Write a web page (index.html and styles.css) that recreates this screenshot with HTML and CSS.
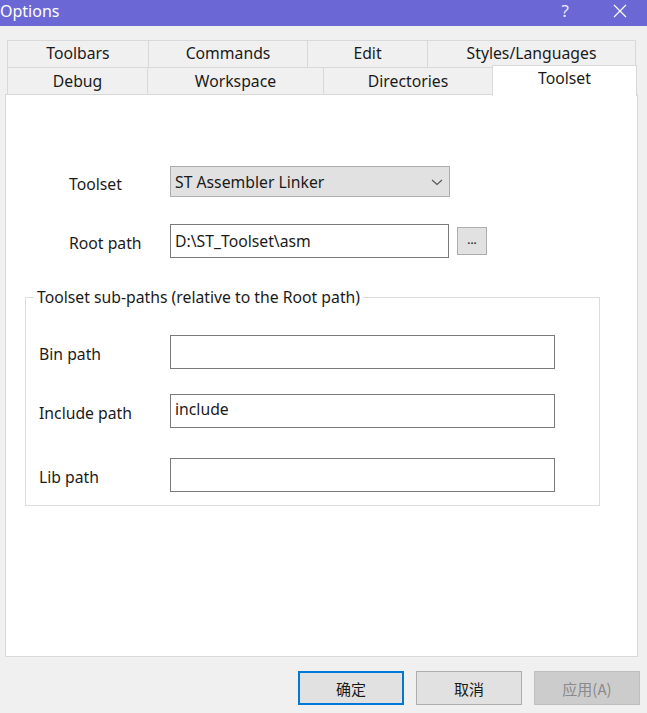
FILE: index.html
```html
<!DOCTYPE html>
<html>
<head>
<meta charset="utf-8">
<link rel="stylesheet" href="styles.css">
</head>
<body>
<div class="dialog">
  <div class="titlebar">
    <span class="title">Options</span>
    <span class="tb-help">?</span>
    <span class="tb-close">
      <svg width="14" height="14" viewBox="0 0 14 14"><path d="M1 1 L13 13 M13 1 L1 13" stroke="#fff" stroke-width="1.2" fill="none"/></svg>
    </span>
  </div>

  <div class="tabs">
    <div class="tabrow row1">
      <div class="tab w-toolbars">Toolbars</div>
      <div class="tab w-commands">Commands</div>
      <div class="tab w-edit">Edit</div>
      <div class="tab w-styles">Styles/Languages</div>
    </div>
    <div class="tabrow row2">
      <div class="tab w-debug">Debug</div>
      <div class="tab w-workspace">Workspace</div>
      <div class="tab w-directories">Directories</div>
      <div class="tab w-toolset selected">Toolset</div>
    </div>
  </div>

  <div class="panel">
    <div class="toprow">
      <label class="lbl">Toolset</label>
      <div class="select">
        <span>ST Assembler Linker</span>
        <svg class="chev" width="12" height="7" viewBox="0 0 12 7"><path d="M1 1 L6 5.5 L11 1" stroke="#555" stroke-width="1.1" fill="none"/></svg>
      </div>
    </div>
    <div class="toprow root">
      <label class="lbl">Root path</label>
      <div class="input wide">D:\ST_Toolset\asm</div>
      <div class="browse">...</div>
    </div>

    <div class="group">
      <div class="legend">Toolset sub-paths (relative to the Root path)</div>
      <div class="grow bin">
        <label class="glbl">Bin path</label>
        <div class="input sub"></div>
      </div>
      <div class="grow inc">
        <label class="glbl">Include path</label>
        <div class="input sub top">include</div>
      </div>
      <div class="grow lib">
        <label class="glbl">Lib path</label>
        <div class="input sub"></div>
      </div>
    </div>
  </div>

  <div class="buttons">
    <div class="btn ok">确定</div>
    <div class="btn">取消</div>
    <div class="btn disabled">应用(A)</div>
  </div>
</div>
</body>
</html>
```

FILE: styles.css
```css
html, body {
  margin: 0;
  padding: 0;
}
body {
  width: 647px;
  height: 713px;
  overflow: hidden;
  background: #f0f0f0;
  font-family: "Noto Sans", "Noto Sans CJK SC", sans-serif;
  font-size: 15.75px;
  color: #1a1a1a;
}
.dialog {
  display: flex;
  flex-direction: column;
  height: 713px;
}
.titlebar {
  height: 26px;
  background: #6b68d6;
  color: #fff;
  display: flex;
  align-items: center;
}
.title {
  font-size: 16px;
  line-height: 20px;
  margin-top: -4px;
}
.tb-help {
  margin-left: auto;
  font-size: 17px;
  margin-right: 44px;
  margin-top: -5px;
  color: #e8e8ff;
}
.tb-close {
  margin-right: 20px;
  margin-top: -4px;
  display: flex;
}
.tabs {
  margin-top: 14px;
  display: flex;
  flex-direction: column;
}
.tabrow {
  display: flex;
}
.row1 {
  margin-left: 7px;
  height: 27px;
}
.row2 {
  margin-left: 7px;
  height: 28px;
}
.tab {
  box-sizing: border-box;
  border: 1px solid #d9d9d9;
  border-right: none;
  border-bottom: none;
  display: flex;
  align-items: center;
  justify-content: center;
  background: #f0f0f0;
  color: #1a1a1a;
  padding-bottom: 2px;
}
.row1 .tab:last-child { border-right: 1px solid #d9d9d9; }
.w-toolbars { width: 141px; }
.w-commands { width: 159px; }
.w-edit { width: 120px; }
.w-styles { width: 209px; }
.w-debug { width: 140px; }
.w-workspace { width: 176px; }
.w-directories { width: 169px; }
.w-toolset { width: 145px; }
.tab.selected {
  background: #fff;
  margin-top: -2px;
  height: 31px;
  border-right: 1px solid #d9d9d9;
  position: relative;
  z-index: 2;
  align-items: flex-start;
  padding-top: 1px;
  padding-bottom: 0;
}
.panel {
  margin-left: 5px;
  width: 633px;
  height: 563px;
  box-sizing: border-box;
  background: #fff;
  border: 1px solid #d9d9d9;
  margin-top: -1px;
  padding-top: 71px;
}
.toprow {
  display: flex;
  align-items: center;
  height: 31px;
}
.toprow.root {
  margin-top: 27px;
  height: 34px;
}
.lbl {
  width: 101px;
  margin-left: 63px;
  padding-top: 4px;
}
.select {
  box-sizing: border-box;
  width: 280px;
  height: 31px;
  background: #e1e1e1;
  border: 1px solid #adadad;
  display: flex;
  align-items: center;
  padding-left: 4px;
  padding-right: 6px;
  justify-content: space-between;
}
.chev { margin-top: 1px; }
.input {
  box-sizing: border-box;
  height: 34px;
  background: #fff;
  border: 1px solid #7a7a7a;
  display: flex;
  align-items: center;
  padding-left: 4px;
}
.input.wide { width: 279px; }
.input.top { align-items: flex-start; padding-top: 3px; }
.browse {
  box-sizing: border-box;
  width: 30px;
  height: 28px;
  margin-left: 8px;
  background: #e1e1e1;
  border: 1px solid #adadad;
  display: flex;
  align-items: center;
  justify-content: center;
  font-size: 11px;
  font-weight: bold;
  color: #334;
  padding-bottom: 3px;
}
.group {
  margin-top: 39px;
  margin-left: 19px;
  width: 575px;
  height: 209px;
  box-sizing: border-box;
  border: 1px solid #dcdcdc;
  position: relative;
  padding-top: 37px;
}
.legend {
  position: absolute;
  top: -13px;
  left: 8px;
  background: #fff;
  padding: 0 3px;
  line-height: 24px;
}
.grow {
  display: flex;
  align-items: center;
  height: 34px;
}
.grow.inc { margin-top: 25px; }
.grow.lib { margin-top: 30px; }
.glbl {
  width: 131px;
  margin-left: 13px;
  padding-top: 4px;
}
.input.sub { width: 385px; }
.buttons {
  display: flex;
  justify-content: flex-end;
  gap: 12px;
  margin-top: 14px;
  padding-right: 7px;
}
.btn {
  box-sizing: border-box;
  width: 106px;
  height: 34px;
  background: #e1e1e1;
  border: 1px solid #adadad;
  display: flex;
  align-items: center;
  justify-content: center;
  font-family: "Noto Sans CJK SC", sans-serif;
  font-size: 15px;
}
.btn.ok {
  border: 2px solid #0078d7;
}
.btn.disabled {
  background: #cccccc;
  border-color: #bfbfbf;
  color: #8a8a8a;
}
```
